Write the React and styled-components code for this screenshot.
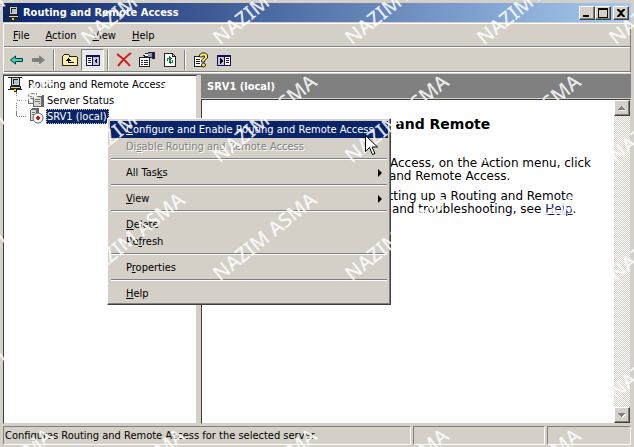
import { useState } from 'react'
import styled, { createGlobalStyle, css } from 'styled-components'

const App = () => {
  const [treeVisible, setTreeVisible] = useState(true)

  return (
    <>
      <GlobalStyle />
      <Window>
        <TitleBar>
          <ConsoleIcon />
          <Title>Routing and Remote Access</Title>
          <CaptionButton aria-label="Minimize">
            <svg width="12" height="10"><path d="M2 7h6v2H2z" /></svg>
          </CaptionButton>
          <CaptionButton aria-label="Maximize">
            <svg width="12" height="10"><path d="M1 0h10v10H1zM2 2v7h8V2z" fillRule="evenodd" /></svg>
          </CaptionButton>
          <CaptionButton aria-label="Close" $spaced>
            <svg width="12" height="10"><path d="M2 1h2l2 2 2-2h2v1L7 5l3 3v1H8L6 7 4 9H2V8l3-3-3-3z" /></svg>
          </CaptionButton>
        </TitleBar>

        <Bars>
          <MenuBar>
            <MenuButton><u>F</u>ile</MenuButton>
            <MenuButton><u>A</u>ction</MenuButton>
            <MenuButton><u>V</u>iew</MenuButton>
            <MenuButton><u>H</u>elp</MenuButton>
          </MenuBar>
          <ToolBar>
            <ToolButton aria-label="Back"><ArrowIcon fill="#3ccfc4" stroke="#003c3c" /></ToolButton>
            <ToolButton aria-label="Forward"><ArrowIcon fill="#808080" stroke="#808080" flip /></ToolButton>
            <ToolSeparator />
            <ToolButton aria-label="Up one level"><FolderUpIcon /></ToolButton>
            <ToolButton
              aria-label="Show/Hide console tree"
              $pressed={treeVisible}
              onClick={() => setTreeVisible(!treeVisible)}
            >
              <PaneIcon />
            </ToolButton>
            <ToolSeparator />
            <ToolButton aria-label="Delete"><DeleteIcon /></ToolButton>
            <ToolButton aria-label="Properties"><PropertiesIcon /></ToolButton>
            <ToolButton aria-label="Refresh"><RefreshIcon /></ToolButton>
            <ToolSeparator />
            <ToolButton aria-label="Help"><HelpIcon /></ToolButton>
            <ToolButton aria-label="Show/Hide action pane"><PaneIcon flip /></ToolButton>
          </ToolBar>
        </Bars>

        <Main>
          {treeVisible && (
            <TreePane>
              <TreeRow><ConsoleIcon /><TreeLabel>Routing and Remote Access</TreeLabel></TreeRow>
              <TreeChildren>
                <TreeChild><StatusIcon /><TreeLabel>Server Status</TreeLabel></TreeChild>
                <TreeChild><ServerIcon /><TreeLabel $selected>SRV1 (local)</TreeLabel></TreeChild>
              </TreeChildren>
            </TreePane>
          )}
          <Details>
            <DetailsHeader>SRV1 (local)</DetailsHeader>
            <DetailsBody>
              <Document>
                <h1>Configure the Routing and Remote<br />Access Server</h1>
                <p>
                  To set up Routing and Remote Access, on the Action menu, click<br />
                  Configure and Enable Routing and Remote Access.
                </p>
                <p>
                  For more information about setting up a Routing and Remote<br />
                  server, deployment scenarios, and troubleshooting, see <a href="#help">Help</a>.
                </p>
              </Document>
              <ScrollBar>
                <ScrollButton aria-label="Scroll up">
                  <svg width="8" height="5"><path d="M4 1h1v1h1v1h1v1h1v1H1V4h1V3h1V2h1z" fill="#fff" /><path d="M3 0h1v1h1v1h1v1h1v1H0V3h1V2h1V1h1z" fill="#808080" /></svg>
                </ScrollButton>
                <ScrollButton aria-label="Scroll down">
                  <svg width="8" height="5"><path d="M1 1h7v1H7v1H6v1H5v1H4V4H3V3H2V2H1z" fill="#fff" /><path d="M0 0h7v1H6v1H5v1H4v1H3V3H2V2H1V1H0z" fill="#808080" /></svg>
                </ScrollButton>
              </ScrollBar>
            </DetailsBody>
          </Details>
        </Main>

        <StatusBar>
          <StatusPanel $grow>Configures Routing and Remote Access for the selected server</StatusPanel>
          <StatusPanel $width={132} />
          <StatusPanel $width={84} />
        </StatusBar>

        <ContextMenu>
          <ContextItem $active>
            <span><u>C</u>onfigure and Enable Routing and Remote Access</span>
            <PointerIcon />
          </ContextItem>
          <ContextItem disabled><span>Di<u>s</u>able Routing and Remote Access</span></ContextItem>
          <Divider />
          <ContextItem><span>All Tas<u>k</u>s</span><SubmenuIcon /></ContextItem>
          <Divider />
          <ContextItem><span><u>V</u>iew</span><SubmenuIcon /></ContextItem>
          <Divider />
          <ContextItem><span><u>D</u>elete</span></ContextItem>
          <ContextItem><span>Re<u>f</u>resh</span></ContextItem>
          <Divider />
          <ContextItem><span>P<u>r</u>operties</span></ContextItem>
          <Divider />
          <ContextItem><span><u>H</u>elp</span></ContextItem>
        </ContextMenu>

        <Watermark aria-hidden="true">
          {Array.from({ length: 30 }, (_, i) => <Stamp key={i}>NAZIM ASMA</Stamp>)}
        </Watermark>
      </Window>
    </>
  )
}

export default App

const ConsoleIcon = () => (
  <Icon>
    <path d="M1 1h14v1H1zM1 13h14v1H1z" fill="#222" />
    <path d="M7 12h3v4H7z" fill="#222" />
    <path d="M7 13h2v2H7z" fill="#e8d800" />
    <path d="M4 1h9v9H4z" fill="#222" />
    <path d="M5 2h7v7H5z" fill="#d4d0c8" />
    <path d="M6 3h5v5H6z" fill="#222" />
    <path d="M7 4h4v4H7z" fill="#a8c4d8" />
    <path d="M3 10h11v3H3z" fill="#222" />
    <path d="M4 11h9v1H4z" fill="#d4d0c8" />
  </Icon>
)

const StatusIcon = () => (
  <Icon>
    <path d="M1 1h8v11H0V2z" fill="#777" />
    <path d="M1 2h6v9H1z" fill="#ddd" />
    <path d="M2 4h4v1H2zM2 6h4v1H2z" fill="#777" />
    <path d="M7 3h9v12H5V5z" fill="#666" />
    <path d="M6 5h7v9H6z" fill="#d8d8d8" />
    <path d="M7 7h5v1H7zM7 9h5v1H7z" fill="#777" />
    <path d="M8 3h7l-2 1H7z" fill="#fff" />
    <path d="M11 11h1v1h-1z" fill="#0a0" />
  </Icon>
)

const ServerIcon = () => (
  <Icon>
    <path d="M4 0h7l-1 13H2V2z" fill="#666" />
    <path d="M3 2h5v10H3z" fill="#ddd" />
    <path d="M4 4h3v1H4zM4 6h3v1H4z" fill="#777" />
    <circle cx="10" cy="10" r="5" fill="#fff" stroke="#666" shapeRendering="auto" />
    <path d="M9 8h2v1h1v2h-1v1H9v-1H8V9h1z" fill="#d01020" />
  </Icon>
)

const ArrowIcon = ({ fill, stroke, flip }) => (
  <Icon $flip={flip}>
    {flip && <path d="M3 8l5-4v3h6v3H8v3z" fill="#fff" />}
    <path d="M2.5 8l5-4v2.5h7v3h-7V12z" fill={fill} stroke={stroke} shapeRendering="auto" />
  </Icon>
)

const FolderUpIcon = () => (
  <Icon>
    <path d="M1 3h1V2h5v1h1v1h7v1h1v9H0V4h1z" fill="#222" />
    <path d="M2 3h5v2h8v8H1V4h1z" fill="#ffef9c" />
    <path d="M5 7h1V6h1v1h1v1h1v1H7v1h5v1H6V9H4V8h1z" fill="#000" />
  </Icon>
)

const PaneIcon = ({ flip }) => (
  <Icon $flip={flip}>
    <path d="M1 3h14v11H1z" fill="#101060" />
    <path d="M2 5h5v8H2z" fill="#fff" />
    <path d="M8 5h6v8H8z" fill="#c4c4dc" />
    <path d="M3 6h3v1H3zM3 8h3v1H3zM3 10h3v1H3z" fill="#101060" />
    <path d="M12 6v6L9 9z" fill="#000" />
  </Icon>
)

const DeleteIcon = () => (
  <Icon>
    <path d="M1 2c4 3 9 7 13 12M15 1C9 5 6 9 2 14" fill="none" stroke="#d01818" strokeWidth="2" shapeRendering="auto" />
  </Icon>
)

const PropertiesIcon = () => (
  <Icon>
    <path d="M0 5h11v10H0z" fill="#222" />
    <path d="M1 6h9v8H1z" fill="#fff" />
    <path d="M2 8h2v1H2zM5 8h4v1H5zM2 10h2v1H2zM5 10h4v1H5zM2 12h2v1H2zM5 12h4v1H5z" fill="#222" />
    <path d="M4 3h2V1h3V0h7v7h-3V6H9V5H5V4H4z" fill="#222" />
    <path d="M6 2h3v2H6z" fill="#fff" />
    <path d="M9 1h4v4H9z" fill="#9090b8" />
    <path d="M13 1h2v5h-2z" fill="#202070" />
  </Icon>
)

const RefreshIcon = () => (
  <Icon>
    <path d="M2 1h9v1h1v1h1v1h1v11H2z" fill="#222" />
    <path d="M3 2h7v3h3v9H3z" fill="#fff" />
    <path d="M11 3h1v1h-1z" fill="#fff" />
    <path d="M5 9V6h2V4l3 3-3 2V7H6v2zM11 8v3H9v2l-3-3 3-2v2h1V8z" fill="#108040" />
  </Icon>
)

const HelpIcon = () => (
  <Icon>
    <path d="M1 4h9v11H1z" fill="#222" />
    <path d="M2 5h8v9H2z" fill="#fff" />
    <path d="M3 7h4v1H3zM3 9h4v1H3zM3 11h4v1H3z" fill="#222" />
    <path d="M6.5 5V3l2-2h4l2 2v3l-3 2.500v1.500h-3V8l3-2.500V4h-2v1z" fill="#ffee50" stroke="#222" shapeRendering="auto" />
    <circle cx="10.5" cy="13" r="2" fill="#ffee50" stroke="#222" shapeRendering="auto" />
  </Icon>
)

const SubmenuIcon = () => (
  <svg width="12" height="8"><path d="M4 0l4 4-4 4z" fill="#000" /></svg>
)

const PointerIcon = () => (
  <Pointer width="13" height="21" viewBox="0 0 13 21">
    <path d="M.5 .5v16l4-4 3 7 2.500-1-3-6.500h5.500z" fill="#fff" stroke="#000" />
  </Pointer>
)

const GlobalStyle = createGlobalStyle`
  * {
    box-sizing: border-box;
  }

  body {
    margin: 0;
    background: #d4d0c8;
    color: #000;
    font: 11px/13px "DejaVu Sans Condensed", Tahoma, sans-serif;
  }

  button {
    padding: 0;
    border: 0;
    background: none;
    color: inherit;
    font: inherit;
  }
`

const raised = css`
  background: #d4d0c8;
  border: 1px solid;
  border-color: #fff #404040 #404040 #fff;
  box-shadow: inset -1px -1px #808080;
`

const Window = styled.div`
  position: relative;
  min-height: 100vh;
  display: flex;
  flex-direction: column;
  padding: 3px 3px 2px;
  background: #d4d0c8;
  overflow: hidden;
`

const Icon = styled.svg.attrs({ viewBox: '0 0 16 16', shapeRendering: 'crispEdges' })`
  width: 16px;
  height: 16px;
  flex: none;
  transform: ${ props => props.$flip ? 'scaleX(-1)' : 'none' };
`

const TitleBar = styled.header`
  height: 19px;
  display: flex;
  align-items: center;
  padding: 0 2px;
  background: linear-gradient(to right, #0a246a, #a6caf0);
`

const Title = styled.h2`
  flex: 1;
  margin: 0 0 0 2px;
  color: #fff;
  font-size: 11px;
`

const CaptionButton = styled.button`
  ${raised}
  width: 16px;
  height: 14px;
  display: flex;
  align-items: center;
  justify-content: center;
  margin-left: ${ props => props.$spaced ? '2px' : '0' };
`

const Bars = styled.div`
  margin-top: 1px;
  border: 1px solid #fff;
  border-right-color: #808080;
`

const MenuBar = styled.nav`
  height: 23px;
  display: flex;
  align-items: center;
  padding-left: 1px;
  border-bottom: 1px solid #808080;
`

const MenuButton = styled.button`
  padding: 0 8px;
`

const ToolBar = styled.div`
  height: 25px;
  display: flex;
  align-items: center;
  border-top: 1px solid #fff;
  border-bottom: 1px solid #808080;
`

const ToolButton = styled.button`
  width: 23px;
  height: 22px;
  display: flex;
  align-items: center;
  justify-content: center;
  border: 1px solid transparent;
  ${ props => props.$pressed && css`
    background: #ebe9e4;
    border-color: #808080 #fff #fff #808080;
  `}
`

const ToolSeparator = styled.span`
  width: 2px;
  height: 20px;
  margin: 0 3px;
  border-left: 1px solid #808080;
  border-right: 1px solid #fff;
`

const Main = styled.main`
  flex: 1;
  display: flex;
  gap: 4px;
  margin-top: 1px;
  border-top: 1px solid #808080;
`

const TreePane = styled.section`
  width: 194px;
  padding: 0 3px;
  background: #fff;
  border: 1px solid;
  border-color: #404040 #d4d0c8 #d4d0c8 #404040;
  box-shadow: inset -1px -1px #fff;
`

const TreeRow = styled.div`
  height: 16px;
  display: flex;
  align-items: center;
  gap: 4px;
`

const TreeLabel = styled.span`
  padding: 1px;
  white-space: nowrap;
  ${ props => props.$selected && css`
    padding-right: 2px;
    background: #0a246a;
    color: #fff;
    outline: 1px dotted #d8c878;
    outline-offset: -1px;
  `}
`

const TreeChildren = styled.ul`
  margin: 0 0 0 9px;
  padding: 0;
  list-style: none;
`

const TreeChild = styled.li`
  height: 16px;
  display: flex;
  align-items: center;
  gap: 2px;
  border-left: 1px dotted #808080;

  &::before {
    content: '';
    width: 9px;
    border-top: 1px dotted #808080;
  }

  &:last-child {
    border-image: linear-gradient(#808080 50%, transparent 50%) 1;
  }
`

const Details = styled.section`
  flex: 1;
  display: flex;
  flex-direction: column;
  min-width: 0;
`

const DetailsHeader = styled.h2`
  height: 23px;
  margin: 0 0 1px;
  padding: 5px 6px;
  background: #808080;
  color: #fff;
  font-size: 11px;
`

const DetailsBody = styled.div`
  flex: 1;
  display: flex;
  background: #fff;
  border: 1px solid;
  border-color: #404040 #d4d0c8 #d4d0c8 #404040;
`

const Document = styled.article`
  flex: 1;
  min-width: 0;
  padding: 16px 4px;
  overflow: hidden;
  white-space: nowrap;
  font: 12px/13px "DejaVu Sans", Verdana, sans-serif;

  h1 {
    margin: 0 0 9px;
    padding-left: 10px;
    font-size: 14px;
    line-height: 16px;
  }

  p {
    margin: 0 0 7px;
  }

  a {
    color: #101060;
  }
`

const ScrollBar = styled.div`
  width: 16px;
  display: flex;
  flex-direction: column;
  justify-content: space-between;
  background: repeating-conic-gradient(#d4d0c8 0 25%, #fff 0 50%) 0 0 / 2px 2px;
`

const ScrollButton = styled.button`
  ${raised}
  width: 16px;
  height: 16px;
  display: flex;
  align-items: center;
  justify-content: center;
`

const StatusBar = styled.footer`
  height: 21px;
  display: flex;
  gap: 2px;
  padding-top: 2px;
`

const StatusPanel = styled.div`
  flex: ${ props => props.$grow ? '1' : 'none' };
  width: ${ props => props.$width ? `${props.$width}px` : 'auto' };
  padding: 2px 1px;
  border: 1px solid;
  border-color: #808080 #fff #fff #808080;
  white-space: nowrap;
`

const ContextMenu = styled.div`
  position: absolute;
  left: 107px;
  top: 118px;
  width: 284px;
  padding: 2px;
  ${raised}
`

const ContextItem = styled.button`
  position: relative;
  width: 100%;
  height: 17px;
  display: flex;
  align-items: center;
  justify-content: space-between;
  padding: 0 2px 0 16px;
  white-space: nowrap;

  ${ props => props.$active && css`
    background: #0a246a;
    color: #fff;
  `}

  &:disabled {
    color: #808080;
    text-shadow: 1px 1px #fff;
  }
`

const Divider = styled.hr`
  height: 2px;
  margin: 3px 1px 4px;
  border: 0;
  border-top: 1px solid #808080;
  border-bottom: 1px solid #fff;
`

const Pointer = styled.svg`
  position: absolute;
  right: 10px;
  top: 14px;
  z-index: 1;
`

const Watermark = styled.div`
  position: absolute;
  left: -42px;
  top: 28px;
  display: grid;
  grid-template-columns: repeat(6, 132px);
  grid-auto-rows: 118px;
  pointer-events: none;
`

const Stamp = styled.span`
  height: 20px;
  color: rgba(255, 255, 255, 0.85);
  font: 500 20px/20px "Noto Sans", sans-serif;
  white-space: nowrap;
  transform: rotate(-39deg);
  transform-origin: 0 20px;
`
